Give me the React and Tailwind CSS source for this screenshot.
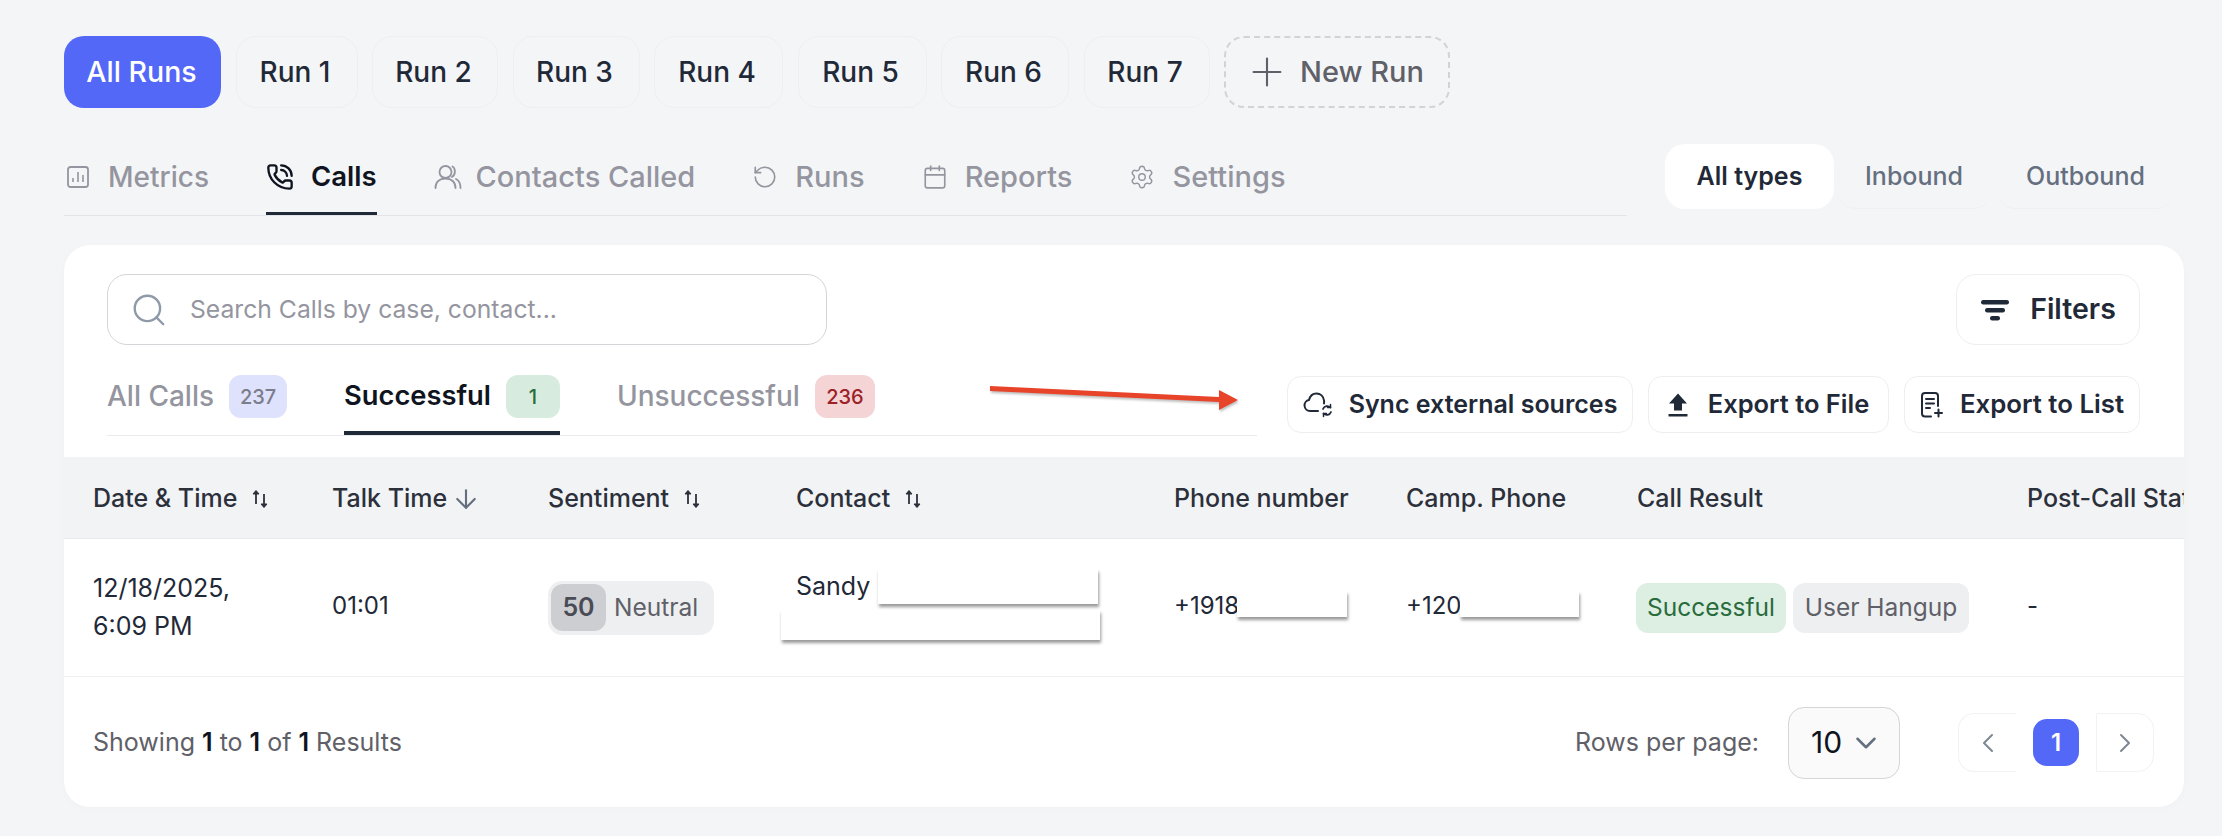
import { Calendar, ChevronDown, ChevronLeft, ChevronRight, ArrowDown, Plus, PhoneCall, RotateCcw, Search, Settings } from "lucide-react";

const RUNS = [
  { label: "Run 1", w: "w-[122px]" },
  { label: "Run 2", w: "w-[126px]" },
  { label: "Run 3", w: "w-[127px]" },
  { label: "Run 4", w: "w-[129px]" },
  { label: "Run 5", w: "w-[129px]" },
  { label: "Run 6", w: "w-[128px]" },
  { label: "Run 7", w: "w-[126px]" },
];

function SortIcon() {
  return (
    <svg width="18" height="20" viewBox="0 0 18 20" fill="none" stroke="#2b303b" strokeWidth="1.8">
      <path d="M5 15V2" />
      <path d="M2 5l3-3.5L8 5z" fill="#2b303b" strokeWidth="1" />
      <path d="M13 5v13" />
      <path d="M10 15l3 3.5 3-3.5z" fill="#2b303b" strokeWidth="1" />
    </svg>
  );
}

function MetricsIcon() {
  return (
    <svg width="22" height="22" viewBox="0 0 22 22" fill="none" stroke="#94959f" strokeWidth="1.8">
      <rect x="1" y="1" width="20" height="20" rx="2.5" />
      <path d="M6 16v-4M11 16V6M16 16V9" strokeWidth="1.6" />
    </svg>
  );
}

function ContactsIcon() {
  return (
    <svg width="28" height="26" viewBox="0 0 28 26" fill="none" stroke="#94959f" strokeWidth="1.8" strokeLinecap="round">
      <circle cx="11.5" cy="8" r="6" />
      <path d="M1.5 24c0-6 4-9.5 10-9.5s10 3.5 10 9.5" />
      <path d="M18.5 2.5c3 1.5 3.5 8-.5 10.5" />
      <path d="M22 15c3 1.5 4.5 5 4.5 9" />
    </svg>
  );
}

function FilterIcon() {
  return (
    <svg width="30" height="22" viewBox="0 0 30 22" fill="#1f2937">
      <rect x="1" y="1" width="28" height="4.5" rx="2.2" />
      <rect x="5" y="9" width="20" height="4.5" rx="2.2" />
      <rect x="10" y="17" width="10" height="4.5" rx="2.2" />
    </svg>
  );
}

function CloudSyncIcon() {
  return (
    <svg width="30" height="26" viewBox="0 0 30 26" fill="none" stroke="#1f2937" strokeWidth="2" strokeLinecap="round" strokeLinejoin="round">
      <path d="M15 19H7a5.5 5.5 0 0 1-1-10.9C7 4 10 1.500 13.500 1.500c4 0 7 3 7.500 7 .2 1 .2 2 0 3" />
      <path d="M20 17a4.500 4.500 0 0 1 7.500-1.500M28 20a4.500 4.500 0 0 1-7.500 1.500" strokeWidth="1.800" />
      <path d="M27.500 12.500v3h-3M20.500 24.500v-3h3" strokeWidth="1.500" />
    </svg>
  );
}

function UploadIcon() {
  return (
    <svg width="20" height="24" viewBox="0 0 20 24" fill="#1f2937">
      <path d="M10 0.500 19 10.500H14V17.500H6V10.500H1z" />
      <rect x="0.500" y="21" width="19" height="2.500" rx="0.500" />
    </svg>
  );
}

function ListPlusIcon() {
  return (
    <svg width="24" height="26" viewBox="0 0 24 26" fill="none" stroke="#1f2937" strokeWidth="2" strokeLinecap="round">
      <path d="M11 24.500H5a3 3 0 0 1-3-3V4a3 3 0 0 1 3-3h10a3 3 0 0 1 3 3v10" />
      <path d="M6 7h8M6 11.500h8M6 16h4" />
      <path d="M18.500 17.500v7M15 21h7" />
    </svg>
  );
}

function TopTab({ icon, label, active, gap = "gap-[17px]", text = "text-[29px]", className = "" }) {
  return (
    <div className={`flex h-[64px] items-center ${gap} border-b-[3px] pb-[10px] ${active ? "border-[#1f2937] text-[27.5px] font-semibold text-[#0f1420]" : `border-transparent font-medium text-[#94959f] ${text}`} ${className}`}>
      {icon}
      <span>{label}</span>
    </div>
  );
}

function CountTab({ label, count, badge, active, className = "" }) {
  return (
    <div className={`flex h-[60px] items-start gap-[15px] border-b-[4px] ${active ? "border-[#1f2937]" : "border-transparent"} ${className}`}>
      <span className={`mt-[3px] leading-[36px] ${active ? "text-[27.3px] font-semibold text-[#0f1420]" : "text-[28px] font-medium text-[#94959f]"}`}>{label}</span>
      <span className={`flex h-[43px] items-center justify-center rounded-[12px] text-[20px] font-medium ${badge}`}>{count}</span>
    </div>
  );
}

function ActionButton({ icon, label, width, text = "text-[25.5px]", gap = "gap-[16px]" }) {
  return (
    <button className={`flex h-[57px] items-center justify-center rounded-[14px] border border-[#edeef0] bg-white font-semibold text-[#1f2937] ${gap} ${text} ${width}`}>
      {icon}
      {label}
    </button>
  );
}

function HeadCell({ children, icon, gap = "gap-[14px]" }) {
  return (
    <div className={`flex items-center whitespace-nowrap ${gap}`}>
      <span>{children}</span>
      {icon}
    </div>
  );
}

// white strips that hide personal data in the reference
function Redaction({ className }) {
  return <div className={`absolute bg-white shadow-[1px_3px_3px_rgba(0,0,0,0.4)] ${className}`} />;
}

export default function App() {
  const gridCols = "grid grid-cols-[239px_216px_248px_378px_232px_231px_390px_200px]";

  return (
    <div className="h-[836px] w-[2222px] overflow-hidden bg-[#f4f5f7] pl-[64px] pr-[38px] pt-[36px] font-['Inter',sans-serif]">
      {/* Run switcher */}
      <div className="flex h-[72px] gap-[14.5px]">
        <button className="w-[157px] rounded-[20px] bg-[#5468f8] pr-[2px] text-[28.5px] font-medium text-white">All Runs</button>
        {RUNS.map(run => (
          <button key={run.label} className={`${run.w} rounded-[20px] border border-[#eeeff2] pr-[3px] text-[28px] font-medium text-[#1f2937]`}>
            {run.label}
          </button>
        ))}
        <button className="flex w-[226px] items-center gap-[10px] rounded-[20px] border-2 border-dashed border-[#d2d3d7] pl-[18px] text-[29px] font-medium text-[#5f6068]">
          <Plus size={46} strokeWidth={1.1} />
          New Run
        </button>
      </div>

      {/* Section tabs and call type */}
      <div className="mt-[36px] flex h-[65px] items-start justify-between">
        <div className="flex h-[72px] w-[1563px] items-end gap-[57px] border-b border-[#e3e4e8]">
          <TopTab className="ml-[3px]" icon={<MetricsIcon />} label="Metrics" gap="gap-[19px]" text="text-[28px]" />
          <TopTab active icon={<PhoneCall size={28} strokeWidth={2} color="#0f1420" />} label="Calls" gap="gap-[17px]" />
          <TopTab icon={<ContactsIcon />} label="Contacts Called" gap="gap-[14px]" />
          <TopTab icon={<RotateCcw size={26} strokeWidth={1.5} color="#94959f" />} label="Runs" />
          <TopTab icon={<Calendar size={26} strokeWidth={1.5} color="#94959f" />} label="Reports" />
          <TopTab icon={<Settings size={26} strokeWidth={1.3} color="#94959f" />} label="Settings" />
        </div>
        <div className="mr-[9px] flex h-[65px] gap-[3px] text-[25px] font-medium">
          <div className="flex w-[169px] items-center justify-center rounded-[20px] bg-white font-semibold text-[#1f2937]">All types</div>
          <div className="flex w-[156px] items-center justify-center rounded-[20px] border-b border-[#eff0f3] pr-[2px] pt-[1px] text-[#64707f]">Inbound</div>
          <div className="flex w-[179px] items-center justify-center rounded-[20px] border-b border-[#eff0f3] pt-[1px] text-[#64707f]">Outbound</div>
        </div>
      </div>

      {/* Calls card */}
      <div className="relative mt-[36px] h-[562px] w-[2120px] overflow-hidden rounded-[26px] bg-white shadow-[0_2px_10px_rgba(0,0,0,0.02)]">
        <div className="flex justify-between pl-[43px] pr-[44px] pt-[29px]">
          <div className="flex h-[71px] w-[720px] items-center gap-[22px] rounded-[20px] border border-[#d4d5d8] pl-[22px]">
            <Search size={38} strokeWidth={1.5} color="#8f9aa8" />
            <span className="text-[24.7px] text-[#94959f]">Search Calls by case, contact...</span>
          </div>
          <button className="flex h-[71px] w-[184px] items-center justify-center gap-[20px] rounded-[20px] border border-[#edeef0] text-[28.5px] font-semibold text-[#1f2937]">
            <FilterIcon />
            Filters
          </button>
        </div>

        <div className="mt-[30px] flex justify-between pl-[43px] pr-[44px]">
          <div className="flex h-[61px] w-[1150px] gap-[57px] border-b border-[#e9eaed]">
            <CountTab label="All Calls" count="237" badge="w-[58px] bg-[#dfe2fd] text-[#7c7d8a]" />
            <CountTab active label="Successful" count="1" badge="w-[54px] bg-[#d7ecdf] text-[#2a6b3c]" />
            <CountTab label="Unsuccessful" count="236" badge="w-[60px] bg-[#f5d4d6] text-[#9b2327]" />
          </div>
          <div className="mt-[1px] flex gap-[15px]">
            <ActionButton icon={<CloudSyncIcon />} label="Sync external sources" width="w-[346px]" text="text-[25px]" />
            <ActionButton icon={<UploadIcon />} label="Export to File" width="w-[241px]" gap="gap-[20px]" />
            <ActionButton icon={<ListPlusIcon />} label="Export to List" width="w-[236px]" text="text-[25.8px]" />
          </div>
        </div>

        {/* Annotation arrow */}
        <svg className="absolute left-[924px] top-[140px]" width="254" height="28" viewBox="0 0 254 28">
          <path d="M2 1 L231 12 L231 5 L250 15 L231 25 L231 17 L2 6z" fill="#e8442a" style={{ filter: "drop-shadow(1px 2px 1px rgba(0,0,0,0.25))" }} />
        </svg>

        <div className="mt-[21px] overflow-hidden">
          <div className={`${gridCols} h-[82px] items-center border-b border-[#e9eaed] bg-[#f2f3f5] pl-[29px] pt-[2px] text-[25px] font-medium text-[#2b303b]`}>
            <HeadCell icon={<SortIcon />}>Date &amp; Time</HeadCell>
            <HeadCell icon={<ArrowDown size={30} strokeWidth={1.7} color="#64707f" />} gap="gap-[4px]">Talk Time</HeadCell>
            <HeadCell icon={<SortIcon />}>Sentiment</HeadCell>
            <HeadCell icon={<SortIcon />}>Contact</HeadCell>
            <HeadCell>Phone number</HeadCell>
            <HeadCell>Camp. Phone</HeadCell>
            <HeadCell>Call Result</HeadCell>
            <HeadCell>Post-Call Status</HeadCell>
          </div>

          <div className={`${gridCols} relative h-[138px] items-center border-b border-[#eeeff1] pl-[29px] text-[24px] text-[#1f2937]`}>
            <div className="-mt-[2px] text-[25px] leading-[38px]">12/18/2025,<br />6:09 PM</div>
            <div className="-mt-[4px]">01:01</div>
            <div className="flex h-[54px] w-[166px] items-center gap-[8px] rounded-[14px] bg-[#eeeff1] pl-[3px] text-[24.5px] text-[#5f6068]">
              <span className="flex h-[47px] w-[55px] items-center justify-center rounded-[12px] bg-[#cdced2] text-[25px] font-semibold text-[#494b55]">50</span>
              Neutral
            </div>
            <div className="-mt-[42px] text-[25px]">Sandy</div>
            <div className="-mt-[4px]">+1918</div>
            <div className="-mt-[4px]">+120</div>
            <div className="-ml-[1px] flex gap-[7px]">
              <span className="flex h-[50px] w-[150px] items-center justify-center rounded-[12px] bg-[#dcefe2] text-[24.5px] text-[#2a6b3c]">Successful</span>
              <span className="flex h-[50px] w-[176px] items-center justify-center rounded-[12px] bg-[#eeeff1] text-[24.5px] text-[#5f6068]">User Hangup</span>
            </div>
            <div className="-mt-[4px]">-</div>

            <Redaction className="left-[814px] top-[30px] h-[35px] w-[220px]" />
            <Redaction className="left-[717px] top-[71px] h-[30px] w-[319px]" />
            <Redaction className="left-[1173px] top-[52px] h-[26px] w-[110px]" />
            <Redaction className="left-[1396px] top-[52px] h-[26px] w-[119px]" />
          </div>

          <div className="flex h-[131px] items-center justify-between pl-[29px] pr-[30px] text-[25px] text-[#5f6068]">
            <div>
              Showing <b className="font-semibold text-[#0f1420]">1</b> to <b className="font-semibold text-[#0f1420]">1</b> of <b className="font-semibold text-[#0f1420]">1</b> Results
            </div>
            <div className="flex items-center">
              <span>Rows per page:</span>
              <div className="ml-[29px] flex h-[72px] w-[112px] items-center gap-[7px] rounded-[16px] border border-[#d4d5d8] bg-[#fafafa] pl-[22px] text-[30px] text-[#0f1420]">
                10
                <ChevronDown size={34} strokeWidth={1.8} color="#64707f" />
              </div>
              <div className="ml-[58px] flex h-[59px] w-[58px] items-center justify-center rounded-l-[16px] border-y border-l border-[#f1f2f4]">
                <ChevronLeft size={32} strokeWidth={1.5} color="#7d8794" />
              </div>
              <div className="ml-[17px] flex h-[47px] w-[46px] items-center justify-center rounded-[14px] bg-[#5468f8] text-[24px] font-semibold text-white">1</div>
              <div className="ml-[17px] flex h-[59px] w-[58px] items-center justify-center rounded-r-[16px] border-y border-r border-l border-[#f1f2f4]">
                <ChevronRight size={32} strokeWidth={1.5} color="#7d8794" />
              </div>
            </div>
          </div>
        </div>
      </div>
    </div>
  );
}
